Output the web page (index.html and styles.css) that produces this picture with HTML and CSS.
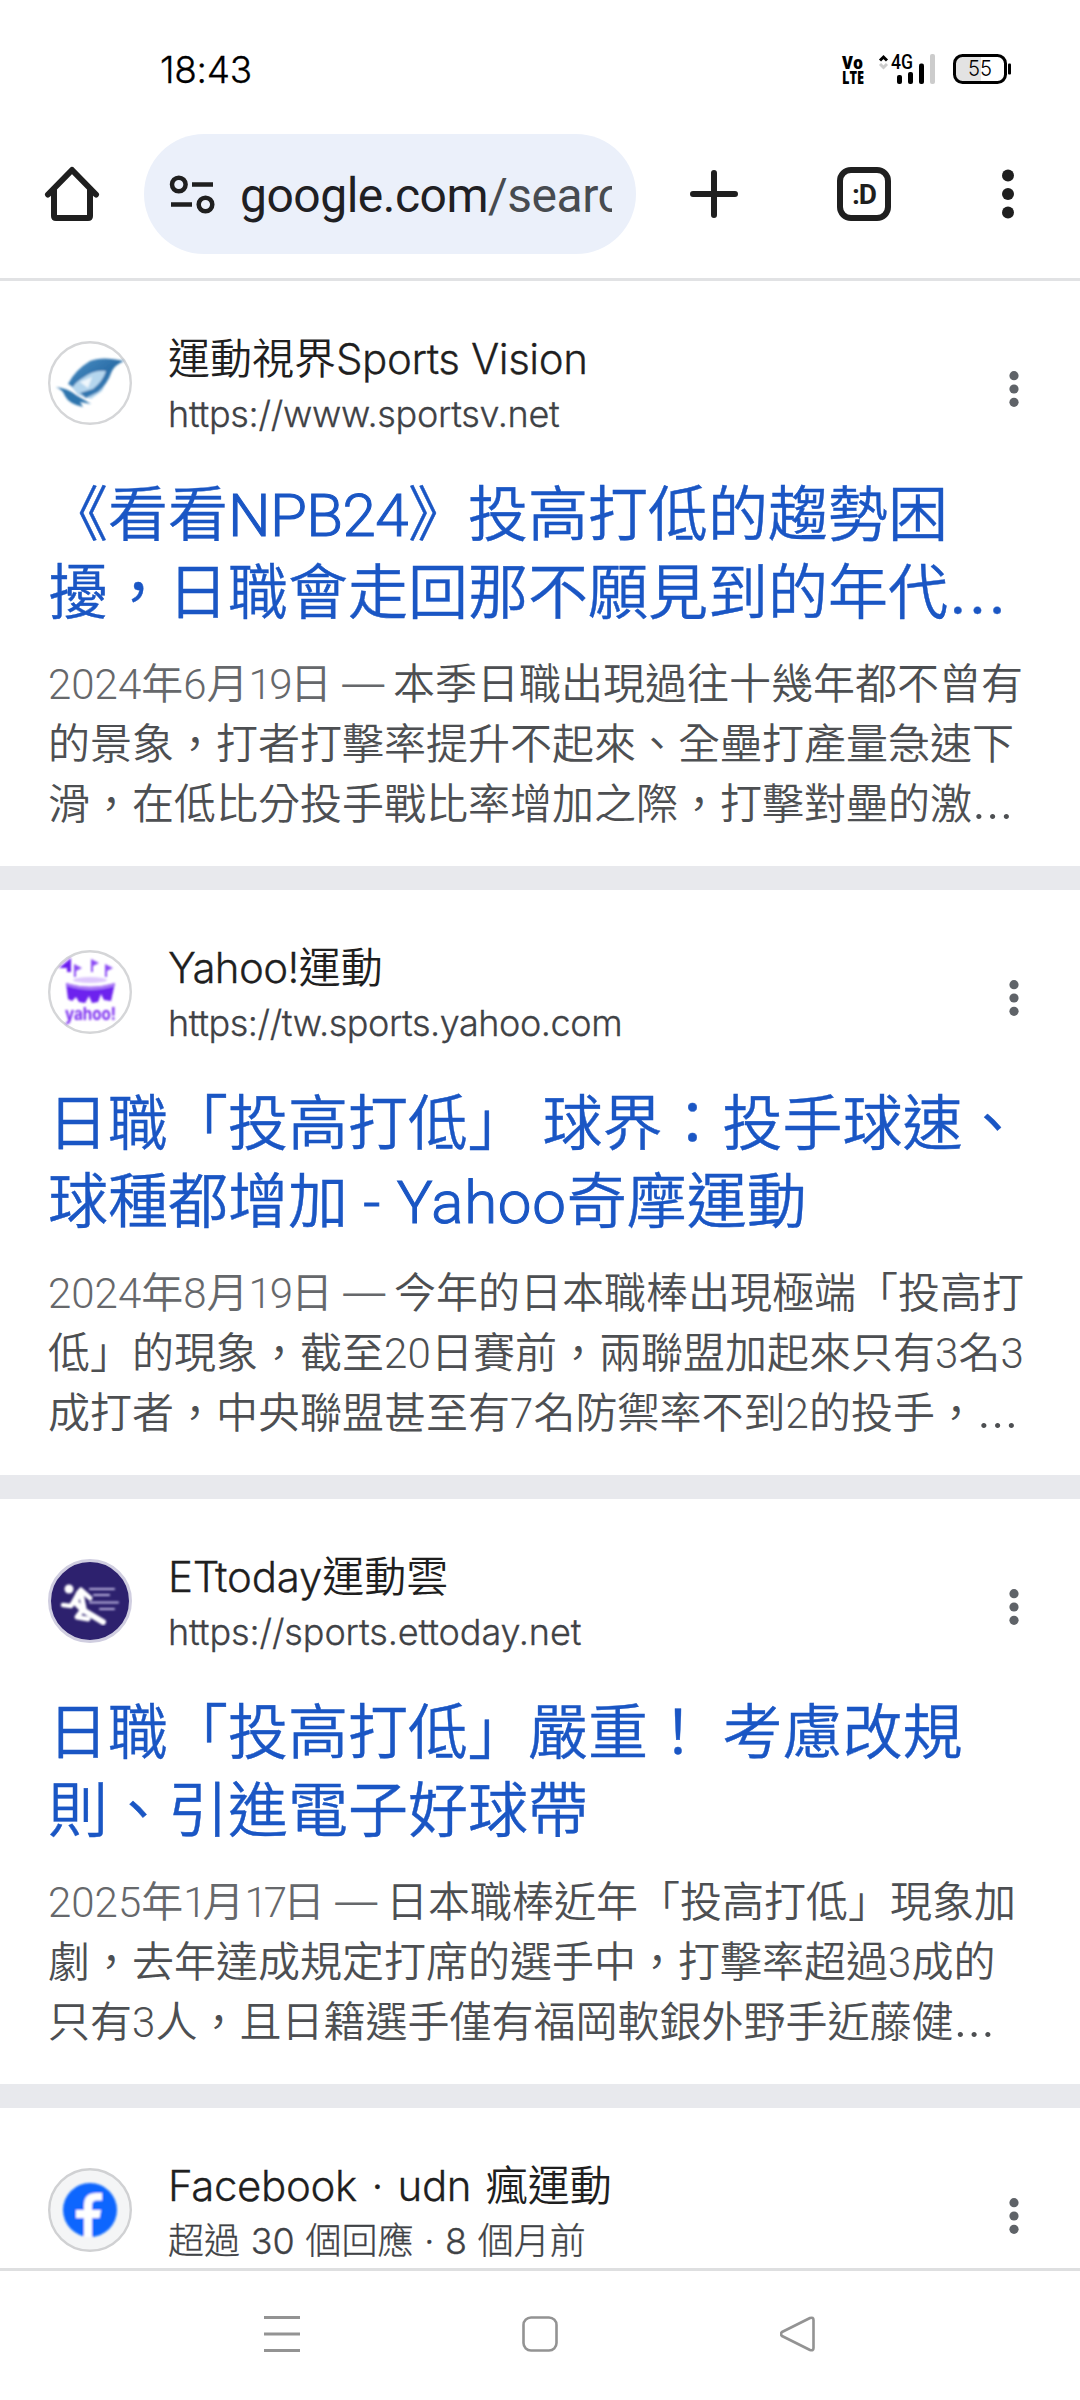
FILE: index.html
```html
<!DOCTYPE html>
<html lang="zh-Hant">
<head>
<meta charset="utf-8">
<title>Google</title>
<link rel="stylesheet" href="styles.css">
</head>
<body>
<div class="screen">
  <header class="status">
    <span class="clock">18:43</span>
    <svg class="signals" width="172" height="36" viewBox="841 51 172 36">
      <g class="volte"><text x="842" y="69" textLength="21" lengthAdjust="spacingAndGlyphs">Vo</text><text x="842" y="84" textLength="22" lengthAdjust="spacingAndGlyphs">LTE</text></g>
      <path d="M880 60.500l3.500-3.500 3.500 3.500" fill="none" stroke="#000" stroke-width="3"/>
      <path d="M880 64l3.500 3.500 3.500-3.500" fill="none" stroke="#ccc" stroke-width="3"/>
      <text class="net" x="891" y="68.500" textLength="22" lengthAdjust="spacingAndGlyphs">4G</text>
      <g><rect x="897" y="75" width="5" height="9" rx="2"/><rect x="908" y="72" width="5" height="12" rx="2"/><rect x="919" y="63.500" width="5" height="20.500" rx="2"/><rect x="930" y="54" width="5" height="30" rx="2" fill="#ccc"/></g>
      <path d="M960 55.500h21v27h-21q-5.500 0-5.500-5.500v-16q0-5.500 5.500-5.500z" fill="#e3e3e3"/>
      <rect x="954.500" y="55.500" width="51" height="27" rx="8" fill="none" stroke="#000" stroke-width="3"/>
      <rect x="1008" y="63.500" width="3" height="11" rx="1"/>
      <text class="charge" x="968" y="76" textLength="24" lengthAdjust="spacingAndGlyphs">55</text>
    </svg>
  </header>

  <nav class="toolbar">
    <svg class="home" width="56" height="56" viewBox="0 0 56 56" fill="none" stroke="#1f1f1f" stroke-width="6" stroke-linecap="round" stroke-linejoin="round"><path d="M4 28.500L28 4l24 24.500"/><path d="M10 24v26q0 2 2 2h32q2 0 2-2V24" /></svg>
    <div class="omnibox">
      <svg width="46" height="40" viewBox="0 0 46 40" fill="none" stroke="#1f1f1f" stroke-width="4.500"><circle cx="9.800" cy="10.500" r="6.800"/><path d="M23 10.500h21M2 30.500h21"/><circle cx="36.500" cy="30.500" r="6.800"/></svg>
      <span class="address">google.com<span class="path">/search</span></span>
    </div>
    <svg class="add" width="48" height="50" viewBox="0 0 48 50" fill="none" stroke="#1f1f1f" stroke-width="6" stroke-linecap="round"><path d="M3 25h42M24 4v42"/></svg>
    <span class="tabs">:D</span>
    <svg class="menu" width="14" height="50" viewBox="0 0 14 50" fill="#1f1f1f"><circle cx="7" cy="6.500" r="6"/><circle cx="7" cy="25" r="6"/><circle cx="7" cy="43.500" r="6"/></svg>
  </nav>

  <main class="results">
    <article class="card">
      <div class="source">
        <svg class="favicon" width="84" height="84" viewBox="0 0 84 84"><defs><filter id="soft"><feGaussianBlur stdDeviation=".8"/></filter><linearGradient id="wing" x1="0" y1="0" x2="1" y2="1"><stop offset="0" stop-color="#4f93c8"/><stop offset=".5" stop-color="#2b6ea8"/><stop offset="1" stop-color="#4b8fc4"/></linearGradient></defs><circle cx="42" cy="42" r="40.800" fill="#fff" stroke="#d5d6d8" stroke-width="2.400"/><g filter="url(#soft)"><path d="M22 44Q30 32 43 26 54 22 64 29L54 50 43 58 30 54z" fill="#b5d6ee"/><path d="M20 43Q27 29 42 20 54 15 76 20 67 24 64 30 59 44 50 51L38 57 32 52 45 48Q55 40 58 30 46 28 33 38 27 42 25 46z" fill="url(#wing)"/><path d="M8 46Q19 47 28 54L43 63 32 61 35 66Q21 63 17 55 15 49 8 46z" fill="#2d74ad"/><path d="M32 41l12-5-4 11z" fill="#eef6fc"/></g></svg>
        <div class="who"><p class="name">運動視界<span class="i" style="letter-spacing:-.45px">Sports Vision</span></p><p class="site" style="letter-spacing:-.3px">https://www.sportsv.net</p></div>
        <svg class="more" width="10" height="38" viewBox="0 0 10 38"><circle cx="5" cy="5.700" r="4.600"/><circle cx="5" cy="19" r="4.600"/><circle cx="5" cy="32.300" r="4.600"/></svg>
      </div>
      <h3>《看看<span class="latin" style="letter-spacing:-.6px">NPB24</span>》投高打低的趨勢困<br>擾，日職會走回那不願見到的年代<span class="dots">…</span></h3>
      <p class="snippet"><span class="date">2024年6月<span style="letter-spacing:-2.500px">19</span>日<span class="dash"> — </span></span>本季日職出現過往十幾年都不曾有<br>的景象，打者打擊率提升不起來、全壘打產量急速下<br>滑，在低比分投手戰比率增加之際，打擊對壘的激<span class="dots">…</span></p>
    </article>

    <article class="card">
      <div class="source">
        <svg class="favicon" width="84" height="84" viewBox="0 0 84 84"><circle cx="42" cy="42" r="40.800" fill="#fff" stroke="#d5d6d8" stroke-width="2.400"/><g filter="url(#soft)"><path d="M11 18L23 8v14h-4v-4h-5z" fill="#6a1ff0"/><g fill="#8b4cf4"><path d="M26 14l8 4-6 3v6h-2zM43 9l8 4-6 3v6h-2zM57 14l8 4-6 3v6h-2z"/></g><ellipse cx="42" cy="30" rx="17" ry="3" fill="#ddc8fc"/><path d="M18 33q24 8 49 0l-4 18-7-1-3-6-3 8-6 1-3-7-4 7-6-1-3-5-4 4-4-2z" fill="#6d20ee"/><path d="M18 33q24 7 49 0v3q-24 8-48 0z" fill="#a978f5"/><text class="ylogo" x="17" y="70" textLength="51" lengthAdjust="spacingAndGlyphs">yahoo!</text></g></svg>
        <div class="who"><p class="name"><span class="i" style="letter-spacing:-.6px">Yahoo!</span>運動</p><p class="site" style="letter-spacing:-.45px">https://tw.sports.yahoo.com</p></div>
        <svg class="more" width="10" height="38" viewBox="0 0 10 38"><circle cx="5" cy="5.700" r="4.600"/><circle cx="5" cy="19" r="4.600"/><circle cx="5" cy="32.300" r="4.600"/></svg>
      </div>
      <h3>日職「投高打低」 球界：投手球速、<br>球種都增加<span class="latin" style="letter-spacing:.75px"> - Yahoo</span>奇摩運動</h3>
      <p class="snippet"><span class="date">2024年8月<span style="letter-spacing:-2px">19</span>日<span class="dash"> — </span></span>今年的日本職棒出現極端「投高打<br>低」的現象，截至<span class="n">20</span>日賽前，兩聯盟加起來只有<span class="n">3</span>名<span class="n">3</span><br>成打者，中央聯盟甚至有<span class="n">7</span>名防禦率不到<span class="n">2</span>的投手，<span class="dots">…</span></p>
    </article>

    <article class="card">
      <div class="source">
        <svg class="favicon" width="84" height="84" viewBox="0 0 84 84"><circle cx="42" cy="42" r="40.500" fill="#2d216e" stroke="#d0cee0" stroke-width="3"/><g filter="url(#soft)" fill="none" stroke="#fff" stroke-linecap="round" stroke-linejoin="round"><circle cx="21" cy="30" r="4.500" fill="#fff" stroke="none"/><path d="M15 46l8 1 9-15" stroke-width="4.500"/><path d="M33 31L42 39" stroke-width="5"/><path d="M31 34L27 43L35 51L55 63" stroke-width="6"/><path d="M33 34l3 15-7 9 11 2" stroke-width="5"/><path d="M42 30h24M46 36h15M42 43.500h28M52 50h14" stroke-width="2.200" stroke="#b9b2de"/></g></svg>
        <div class="who"><p class="name"><span class="i" style="letter-spacing:-.2px">ETtoday</span>運動雲</p><p class="site" style="letter-spacing:-.12px">https://sports.ettoday.net</p></div>
        <svg class="more" width="10" height="38" viewBox="0 0 10 38"><circle cx="5" cy="5.700" r="4.600"/><circle cx="5" cy="19" r="4.600"/><circle cx="5" cy="32.300" r="4.600"/></svg>
      </div>
      <h3>日職「投高打低」嚴重！ 考慮改規<br>則、引進電子好球帶</h3>
      <p class="snippet"><span class="date">2025年<span style="letter-spacing:-4px">1</span>月<span style="letter-spacing:-4px">17</span>日<span class="dash"> — </span></span>日本職棒近年「投高打低」現象加<br>劇，去年達成規定打席的選手中，打擊率超過<span class="n">3</span>成的<br>只有<span class="n">3</span>人，且日籍選手僅有福岡軟銀外野手近藤健<span class="dots">…</span></p>
    </article>

    <article class="card last">
      <div class="source">
        <svg class="favicon" width="84" height="84" viewBox="0 0 84 84"><circle cx="42" cy="42" r="40.800" fill="#f4f5f6" stroke="#d0d1d3" stroke-width="2.400"/><g filter="url(#soft)"><circle cx="42" cy="42" r="27" fill="#0b66fe"/><path d="M36 69V50h-8v-8h8v-5q0-12 12-12h6v7.500h-5q-5 0-5 5V42h9l-1.500 8H44v19z" fill="#fff"/></g></svg>
        <div class="who"><p class="name"><span class="i" style="letter-spacing:-.4px;word-spacing:3.300px">Facebook · udn </span>瘋運動</p><p class="site" style="word-spacing:.6px">超過 30 個回應 · 8 個月前</p></div>
        <svg class="more" width="10" height="38" viewBox="0 0 10 38"><circle cx="5" cy="5.700" r="4.600"/><circle cx="5" cy="19" r="4.600"/><circle cx="5" cy="32.300" r="4.600"/></svg>
      </div>
    </article>
  </main>

  <footer class="sysnav">
    <svg width="36" height="36" viewBox="0 0 36 36" fill="none" stroke="#939393" stroke-width="3"><path d="M0 1.500h36M0 18h36M0 34.500h36"/></svg>
    <svg width="36" height="36" viewBox="0 0 36 36" fill="none" stroke="#939393" stroke-width="2.600"><rect x="1.500" y="1.500" width="33" height="33" rx="7.500"/></svg>
    <svg width="36" height="36" viewBox="0 0 36 36" fill="none" stroke="#939393" stroke-width="2.600" stroke-linejoin="round"><path d="M2 16L30 2q3.500-1 3.500 2v28q0 3-3.500 2L2 20q-2-2 0-4z"/></svg>
  </footer>
</div>
</body>
</html>
```
FILE: styles.css
```css
* { box-sizing: border-box; margin: 0; padding: 0; }
body { background: #fff; font-family: Roboto, "Noto Sans CJK TC", sans-serif; }
svg { display: block; flex: none; }

.screen { width: 1080px; height: 2400px; display: flex; flex-direction: column; overflow: hidden; }

.status { height: 110px; padding: 28px 67px 0 160px; display: flex; justify-content: space-between; align-items: center; }
.clock { font: 300 37px Inter, sans-serif; color: #000; letter-spacing: -.3px; -webkit-text-stroke: .3px #000; }
.signals { overflow: visible; }
.volte { font: 800 18px "Open Sans", sans-serif; }
.net { font: 500 20px Roboto, sans-serif; }
.charge { font: 300 22px Inter, sans-serif; }

.toolbar { height: 171px; padding: 0 65px 0 44px; border-bottom: 3px solid #e1e2e4; display: flex; align-items: center; }
.omnibox { width: 492px; height: 120px; margin-left: 44px; padding: 0 24px 0 25px; border-radius: 60px; background: #ebf0fa; display: flex; align-items: center; }
.address { margin-left: 25px; flex: 1; overflow: hidden; white-space: nowrap; font-size: 48px; line-height: 70px; letter-spacing: -.5px; color: #1f2023; padding-top: 4px; }
.path { color: #474b50; }
.add { margin-left: 54px; }
.tabs { width: 54px; height: 54px; margin-left: 99px; border: 6px solid #1f1f1f; border-radius: 14px; display: flex; align-items: center; justify-content: center; font: 700 28px Roboto, sans-serif; letter-spacing: -1px; color: #1f1f1f; }
.menu { margin-left: auto; }

.results { flex: 1; overflow: hidden; }
.card { height: 609px; padding: 48px 48px 0; border-bottom: 24px solid #e8e9ed; white-space: nowrap; }
.last { border: 0; }
.source { display: flex; height: 110px; }
.favicon { margin-top: 12px; }
.who { margin-left: 36px; flex: 1; }
.name { font-size: 42px; line-height: 60px; font-weight: 350; color: #1f1f1f; }
.i { font-family: Inter, sans-serif; font-weight: 300; -webkit-text-stroke: .3px; }
.site { font: 300 36px/49px Inter, "Noto Sans CJK TC", sans-serif; color: #3f4246; -webkit-text-stroke: .3px; }
.more { margin: 41px 13px 0 0; fill: #5f6368; }

h3 { margin-top: 38px; font-size: 60px; line-height: 78px; font-weight: 350; color: #1a56c4; -webkit-text-stroke: .4px; }
.latin { -webkit-text-stroke: 1px; }
.snippet { margin-top: 21px; font-size: 42px; line-height: 60px; font-weight: 350; color: #4d4f52; }
.date { color: #66686b; }
.dash { font-family: Inter, sans-serif; font-weight: 300; letter-spacing: -1.6px; }
.n { letter-spacing: .2px; }
.dots { font-family: Inter, sans-serif; font-size: 1.16em; line-height: 0; font-weight: 300; }
.ylogo { font: 700 17px Inter, sans-serif; fill: #7a2cf0; }

.sysnav { height: 132px; border-top: 3px solid #dedfe0; padding: 0 264px 3px; display: flex; align-items: center; justify-content: space-between; }
```
